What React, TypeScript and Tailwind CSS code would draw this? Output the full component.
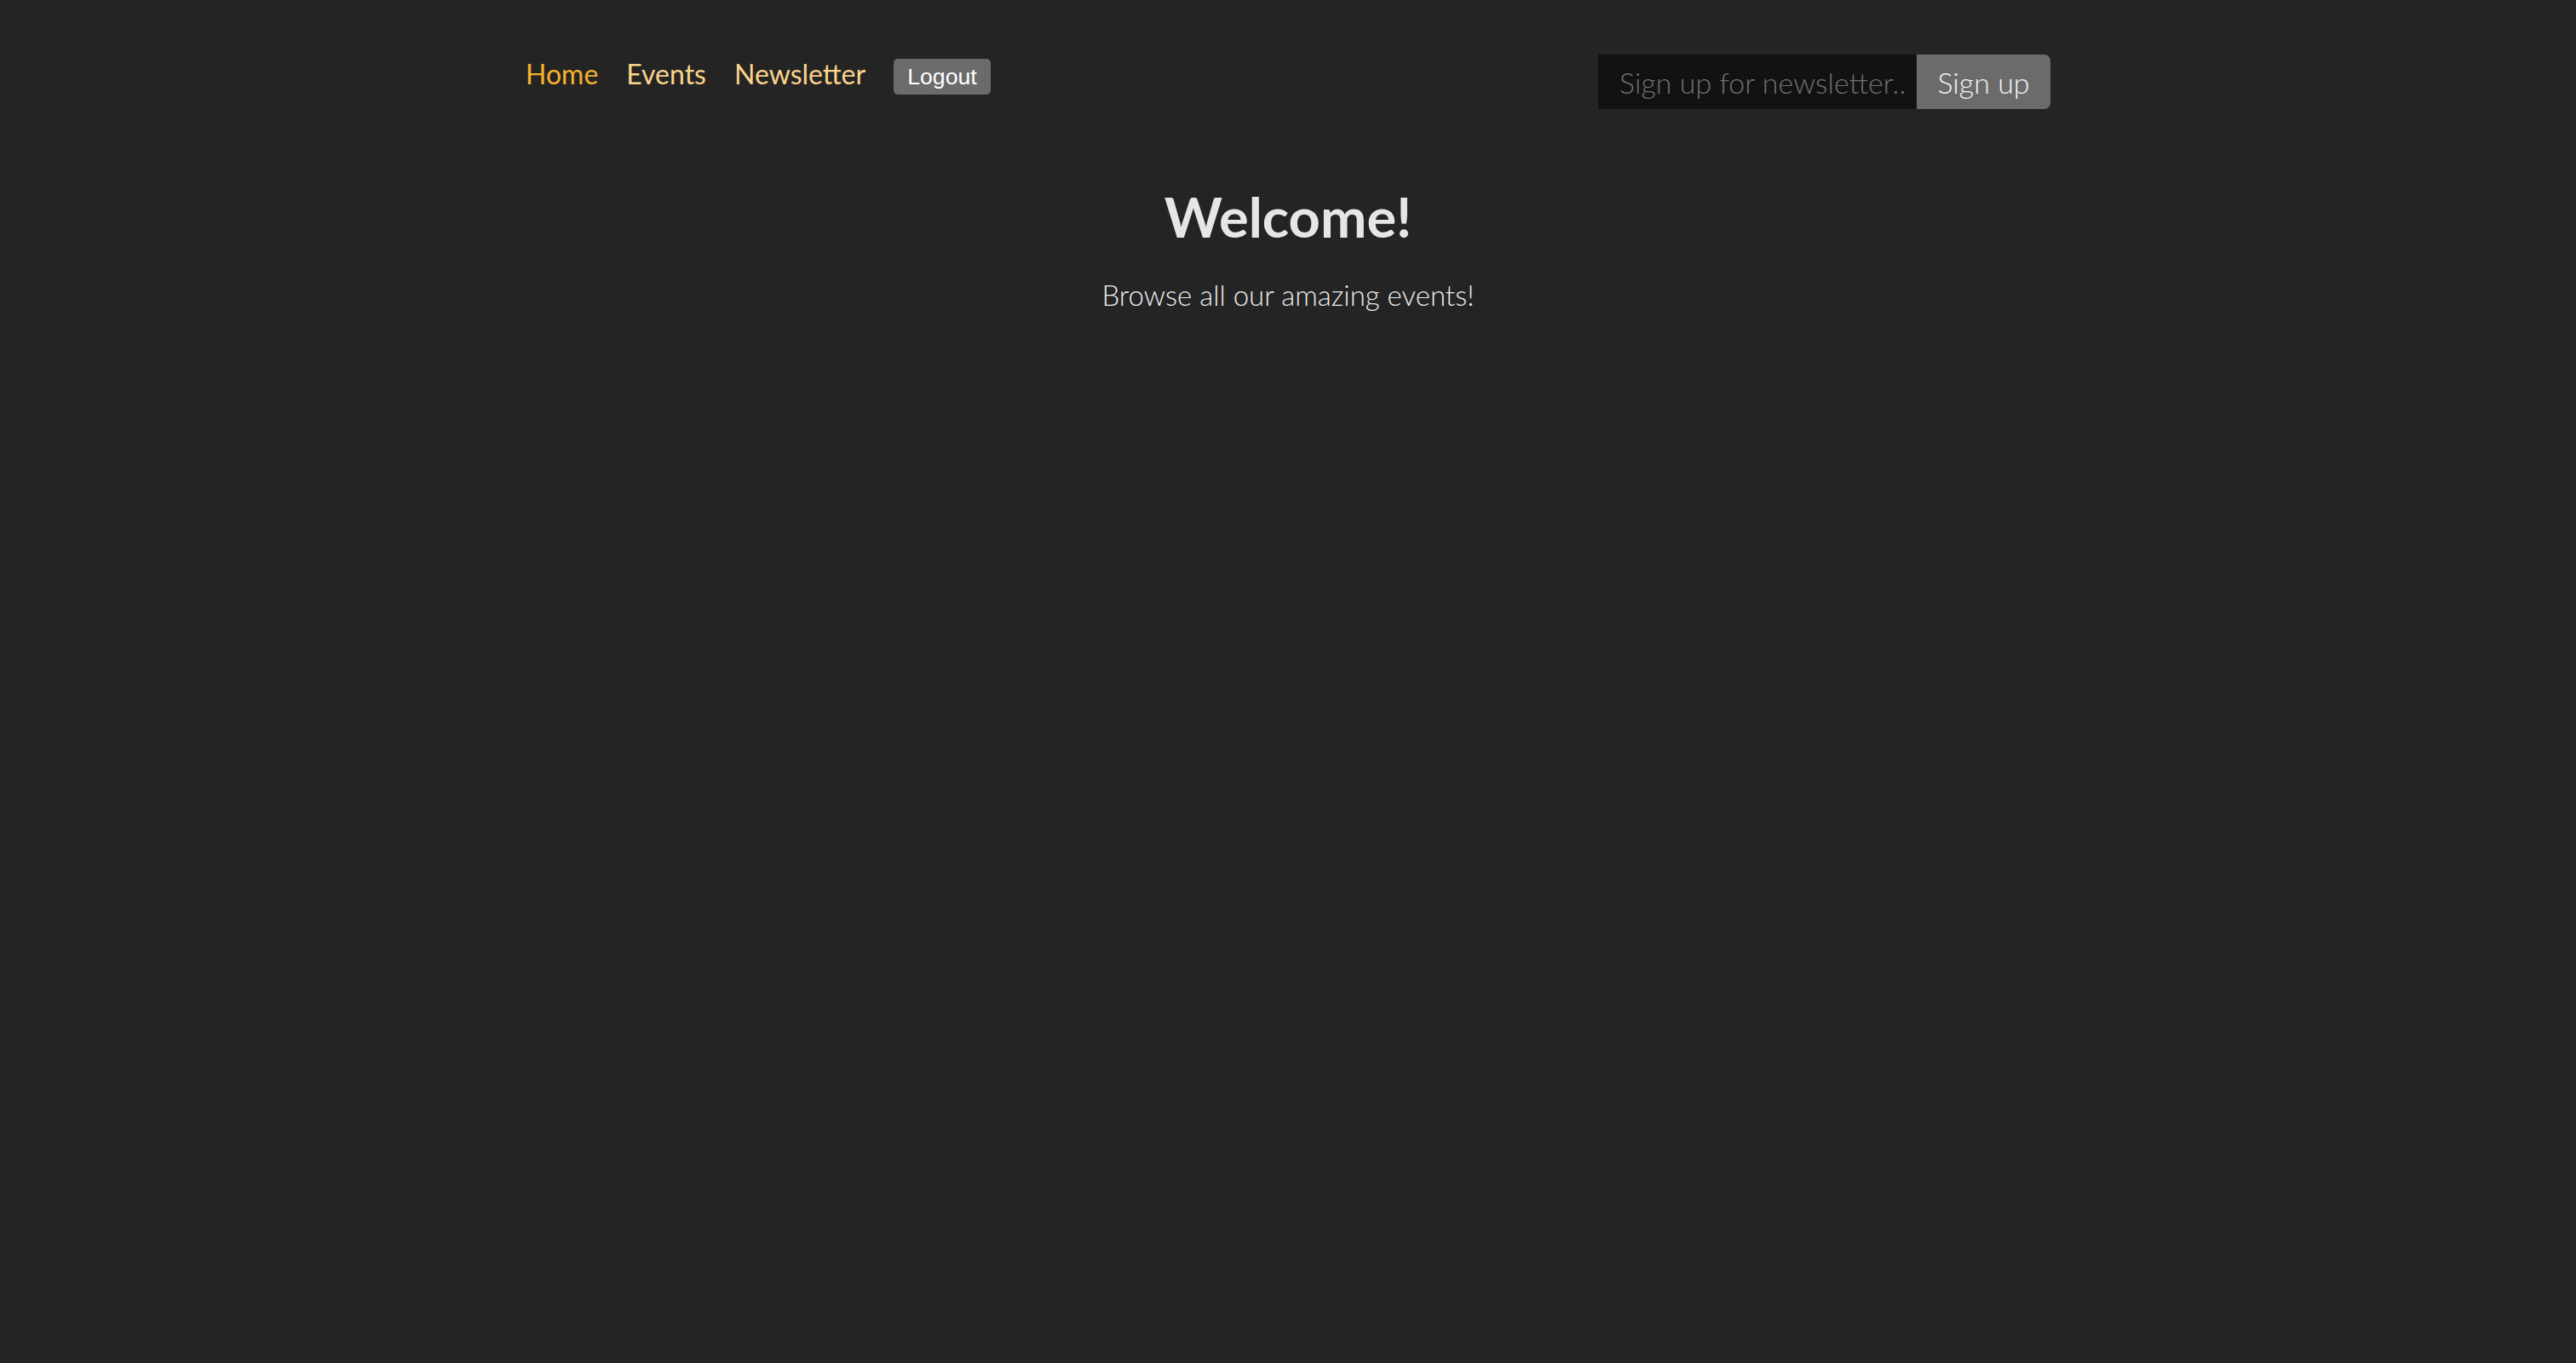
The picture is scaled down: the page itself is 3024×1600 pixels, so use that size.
const sans = "font-['Lato','Open_Sans',sans-serif]";

function NavBar() {
  return (
    <header className="mx-auto flex w-[1790px] items-start justify-between pt-[63px]">
      <nav className={`flex items-baseline gap-[33px] ${sans} text-[32px] leading-[48px]`}>
        <a href="#" className="text-[#f4b22e]">
          Home
        </a>
        <a href="#" className="text-[#fbd48c]">
          Events
        </a>
        <a href="#" className="text-[#fbd48c]">
          Newsletter
        </a>
        <button className="h-[42px] rounded-[5px] bg-[#6b6b6b] px-[16px] font-['Liberation_Sans',Arial,sans-serif] text-[26.67px] leading-none text-white">
          Logout
        </button>
      </nav>
      <form className={`mt-[1px] flex ${sans} text-[34px] font-light`}>
        <input
          type="email"
          placeholder="Sign up for newsletter.."
          className="h-[64px] w-[374px] bg-[#121212] pl-[25px] pr-[10px] text-[#e6e6e6] outline-none placeholder:text-[#707070]"
        />
        <button className="h-[64px] w-[157px] rounded-r-[7px] bg-[#6b6b6b] text-[#f4f4f4]">
          Sign up
        </button>
      </form>
    </header>
  );
}

export default function App() {
  return (
    <div className="min-h-[1600px] bg-[#242424]">
      <NavBar />
      <main className={`flex flex-col items-center pt-[87px] ${sans} text-[#e6e6e6]`}>
        <h1 className="text-[65px] leading-[1.2] font-bold">Welcome!</h1>
        <p className="mt-[34px] text-[33px] leading-[1.2] font-light text-[#ececec]">
          Browse all our amazing events!
        </p>
      </main>
    </div>
  );
}
